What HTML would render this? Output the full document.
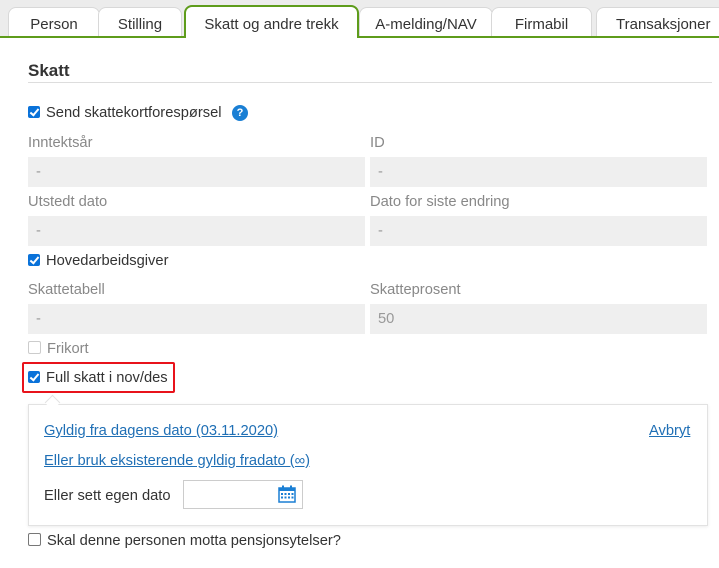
<!DOCTYPE html>
<html><head><style>
body{margin:0;width:719px;height:568px;background:#fff;font-family:"Liberation Sans",sans-serif;font-size:14.7px;color:#333;position:relative;overflow:hidden}
.abs{position:absolute}
.tabbar{left:0;top:0;width:719px;height:37px;background:#ececec}
.tab{position:absolute;top:7px;height:30px;background:#fff;border:1px solid #d8d8d8;border-bottom:none;border-radius:8px 8px 0 0;text-align:center;line-height:33px;font-size:15px;color:#333;box-sizing:border-box}
.active{border:2px solid #5e9c1b;border-bottom:none;top:5px;height:33px;z-index:2}
.line{left:0;top:36px;width:719px;height:2px;background:#5e9c1b}
.lbl{color:#888}
.inp{background:#efefef;height:30px;color:#999;line-height:30px;padding-left:8px;box-sizing:border-box}
.cb{width:12px;height:12px;border-radius:2px;background:#0a72d9;display:inline-block;vertical-align:-1px;margin-right:6px;position:relative}
.cb:after{content:"";position:absolute;left:3.5px;top:1px;width:3px;height:7px;border:solid #fff;border-width:0 2px 2px 0;transform:rotate(40deg)}
.cbo{width:11px;height:11px;border:1px solid #777;border-radius:2px;display:inline-block;vertical-align:-1px;margin-right:6px;background:#fff}
a{color:#1f6fb5;text-decoration:underline}
</style></head><body>
<div class="abs tabbar"></div>
<div class="tab" style="left:8px;width:92px">Person</div>
<div class="tab" style="left:98px;width:84px">Stilling</div>
<div class="tab" style="left:359px;width:134px">A-melding/NAV</div>
<div class="tab" style="left:491px;width:101px">Firmabil</div>
<div class="tab" style="left:596px;width:130px;text-align:left;padding-left:19px">Transaksjoner</div>
<div class="abs line"></div>
<div class="tab active" style="left:184px;width:175px;line-height:35px">Skatt og andre trekk</div>
<div class="abs" style="left:28px;top:61px;font-size:17px;font-weight:bold;color:#333">Skatt</div>
<div class="abs" style="left:28px;top:82px;width:684px;height:1px;background:#ddd"></div>
<div class="abs" style="left:28px;top:105px"><span class="cb"></span>Send skattekortforespørsel</div>
<div class="abs" style="left:232px;top:105px;width:16px;height:16px;border-radius:50%;background:#1a7fd4;color:#fff;font-weight:bold;font-size:11px;text-align:center;line-height:16px">?</div>
<div class="abs lbl" style="left:28px;top:135px">Inntektsår</div>
<div class="abs lbl" style="left:370px;top:135px">ID</div>
<div class="abs inp" style="left:28px;top:157px;width:337px">-</div>
<div class="abs inp" style="left:370px;top:157px;width:337px">-</div>
<div class="abs lbl" style="left:28px;top:194px">Utstedt dato</div>
<div class="abs lbl" style="left:370px;top:194px">Dato for siste endring</div>
<div class="abs inp" style="left:28px;top:216px;width:337px">-</div>
<div class="abs inp" style="left:370px;top:216px;width:337px">-</div>
<div class="abs" style="left:28px;top:253px"><span class="cb"></span>Hovedarbeidsgiver</div>
<div class="abs lbl" style="left:28px;top:282px">Skattetabell</div>
<div class="abs lbl" style="left:370px;top:282px">Skatteprosent</div>
<div class="abs inp" style="left:28px;top:304px;width:337px">-</div>
<div class="abs inp" style="left:370px;top:304px;width:337px">50</div>
<div class="abs lbl" style="left:28px;top:341px"><span class="cbo" style="border-color:#ccc"></span>Frikort</div>
<div class="abs" style="left:22px;top:362px;width:149px;height:27px;border:2px solid #e8131b;border-radius:2px"></div>
<div class="abs" style="left:28px;top:370px"><span class="cb"></span>Full skatt i nov/des</div>
<div class="abs" style="left:28px;top:404px;width:678px;height:120px;border:1px solid #e2e2e2;box-shadow:0 1px 3px rgba(0,0,0,.08)"></div>
<div class="abs" style="left:47px;top:397px;width:10px;height:10px;background:#fff;border-left:1px solid #e2e2e2;border-top:1px solid #e2e2e2;transform:rotate(45deg)"></div>
<div class="abs" style="left:44px;top:423px"><a>Gyldig fra dagens dato (03.11.2020)</a></div>
<div class="abs" style="left:649px;top:423px"><a>Avbryt</a></div>
<div class="abs" style="left:44px;top:453px"><a>Eller bruk eksisterende gyldig fradato (∞)</a></div>
<div class="abs" style="left:44px;top:488px">Eller sett egen dato</div>
<div class="abs" style="left:183px;top:480px;width:120px;height:29px;border:1px solid #ccc;box-sizing:border-box"></div>
<svg class="abs" style="left:278px;top:485px" width="18" height="18" viewBox="0 0 18 18"><rect x="1" y="3" width="16" height="14" fill="#fff" stroke="#1a7fd4" stroke-width="1.5"/><rect x="1" y="3" width="16" height="3" fill="#1a7fd4"/><rect x="4" y="0.5" width="2" height="4" fill="#1a7fd4"/><rect x="12" y="0.5" width="2" height="4" fill="#1a7fd4"/><g fill="#1a7fd4"><rect x="3" y="8" width="2" height="2"/><rect x="6.5" y="8" width="2" height="2"/><rect x="10" y="8" width="2" height="2"/><rect x="13.5" y="8" width="2" height="2"/><rect x="3" y="11.5" width="2" height="2"/><rect x="6.5" y="11.5" width="2" height="2"/><rect x="10" y="11.5" width="2" height="2"/><rect x="13.5" y="11.5" width="2" height="2"/></g></svg>
<div class="abs" style="left:28px;top:533px"><span class="cbo"></span>Skal denne personen motta pensjonsytelser?</div>
</body></html>
